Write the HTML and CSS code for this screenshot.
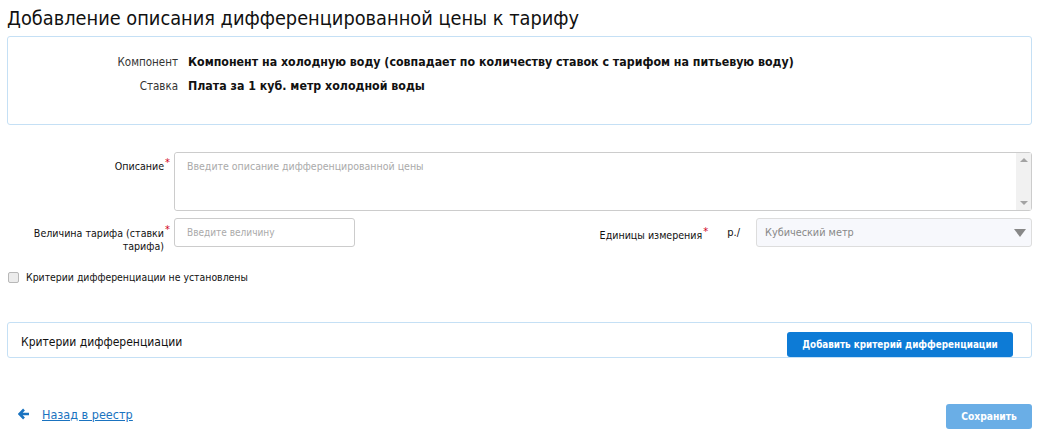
FILE: index.html
```html
<!DOCTYPE html>
<html>
<head lang="ru">
    <meta charset="UTF-8">
    <title>Добавление описания дифференцированной цены к тарифу</title>
    <link rel="stylesheet" href="styles.css">
</head>
<body>
    <div class="page">
        <h1 class="page-title">Добавление описания дифференцированной цены к тарифу</h1>

        <div class="info-box">
            <div class="info-row">
                <span class="info-label">Компонент</span>
                <span class="info-value">Компонент на холодную воду (совпадает по количеству ставок с тарифом на питьевую воду)</span>
            </div>
            <div class="info-row">
                <span class="info-label">Ставка</span>
                <span class="info-value">Плата за 1 куб. метр холодной воды</span>
            </div>
        </div>

        <div class="form-row">
            <label class="form-label">Описание<i class="req">*</i></label>
            <div class="area-wrap">
                <textarea class="area" placeholder="Введите описание дифференцированной цены"></textarea>
                <div class="fake-scroll">
                    <span class="arr-up"></span>
                    <span class="arr-down"></span>
                </div>
            </div>
        </div>

        <div class="form-row row-value">
            <label class="form-label">Величина тарифа (ставки<i class="req">*</i><br>тарифа)</label>
            <input class="field" type="text" placeholder="Введите величину">
            <div class="units">
                <label class="units-label">Единицы измерения<i class="req">*</i></label>
                <span class="units-prefix">р./</span>
                <div class="select-box">
                    <span>Кубический метр</span>
                    <span class="select-arrow"></span>
                </div>
            </div>
        </div>

        <label class="check-row">
            <input type="checkbox" class="check">
            <span>Критерии дифференциации не установлены</span>
        </label>

        <div class="criteria-box">
            <span class="criteria-title">Критерии дифференциации</span>
            <button class="btn btn-primary">Добавить критерий дифференциации</button>
        </div>

        <div class="footer">
            <a class="back-link" href="#">
                <svg class="back-icon" width="12" height="12" viewBox="0 0 12 12">
                    <path d="M6 1.5 L1.5 6 L6 10.5 M1.5 6 H11" stroke="#1a73c0" stroke-width="2.6" fill="none"/>
                </svg>
                <span>Назад в реестр</span>
            </a>
            <button class="btn btn-save">Сохранить</button>
        </div>
    </div>
</body>
</html>
```

FILE: styles.css
```css
body{
    margin: 0;
    padding: 0;
    background-color: #fff;
    font-family: "DejaVu Sans Condensed", "DejaVu Sans", sans-serif;
    color: #000;
}
.page{
    padding: 0 8px 0 7px;
}
.page-title{
    margin: 0;
    padding-top: 5px;
    height: 31px;
    line-height: 28px;
    font-size: 19.8px;
    font-weight: normal;
    color: #111;
}
.info-box{
    border: 1px solid #c5e0f5;
    border-radius: 3px;
    padding: 18px 0 19px 0;
    height: 50px;
}
.info-row{
    display: flex;
    align-items: baseline;
    height: 24px;
}
.info-label{
    width: 170px;
    text-align: right;
    font-size: 11.5px;
    color: #333;
    padding-right: 10px;
}
.info-value{
    font-size: 12.3px;
    font-weight: bold;
    color: #111;
}
.req{
    font-style: normal;
    color: #d0021b;
    font-size: 11px;
    vertical-align: 4px;
    margin-left: 1px;
    margin-right: -6px;
}
.form-row{
    display: flex;
    align-items: flex-start;
    margin-top: 27px;
}
.form-label{
    width: 157px;
    text-align: right;
    font-size: 10.6px;
    line-height: 13px;
    padding-top: 4px;
    margin-right: 10px;
    color: #111;
    flex: none;
}
.area-wrap{
    flex: 1;
    display: flex;
    height: 57px;
    border: 1px solid #ccc;
    border-radius: 3px;
}
.area{
    flex: 1;
    border: none;
    outline: none;
    resize: none;
    padding: 7px 12px;
    font-family: inherit;
    font-size: 10.5px;
    border-radius: 3px;
}
.area::placeholder,
.field::placeholder{
    color: #aaa;
}
.fake-scroll{
    width: 15px;
    background-color: #f1f1f1;
    position: relative;
}
.arr-up,
.arr-down{
    position: absolute;
    left: 4px;
    width: 0;
    height: 0;
    border-left: 4px solid transparent;
    border-right: 4px solid transparent;
}
.arr-up{
    top: 5px;
    border-bottom: 4px solid #a3a3a3;
}
.arr-down{
    bottom: 5px;
    border-top: 4px solid #a3a3a3;
}
.row-value{
    margin-top: 7px;
    height: 29px;
}
.row-value .form-label{
    padding-top: 5px;
}
.field{
    box-sizing: border-box;
    width: 181px;
    height: 29px;
    border: 1px solid #ccc;
    border-radius: 3px;
    padding: 0 12px;
    font-family: inherit;
    font-size: 10px;
    outline: none;
}
.units{
    flex: 1;
    display: flex;
    align-items: center;
    justify-content: flex-end;
    height: 29px;
}
.units-label{
    font-size: 10.6px;
    white-space: nowrap;
    color: #111;
}
.units-prefix{
    font-size: 11px;
    margin-left: 25px;
    margin-right: 16px;
    color: #111;
}
.select-box{
    box-sizing: border-box;
    width: 276px;
    height: 29px;
    border: 1px solid #ddd;
    border-radius: 3px;
    background-color: #f7f8fc;
    display: flex;
    align-items: center;
    justify-content: space-between;
    padding: 0 5px 0 8px;
    font-size: 10.8px;
    color: #888;
}
.select-arrow{
    width: 0;
    height: 0;
    border-left: 6px solid transparent;
    border-right: 6px solid transparent;
    border-top: 8px solid #888;
}
.check-row{
    display: flex;
    align-items: center;
    margin-top: 24px;
    font-size: 10.4px;
    color: #111;
}
.check{
    appearance: none;
    -webkit-appearance: none;
    box-sizing: border-box;
    margin: 0 7px 0 1px;
    width: 11px;
    height: 11px;
    border: 1px solid #b8b8b8;
    border-radius: 2px;
    background-color: #ececec;
}
.criteria-box{
    margin-top: 39px;
    height: 34px;
    border: 1px solid #c5e0f5;
    border-radius: 3px;
    display: flex;
    align-items: flex-end;
    justify-content: space-between;
    padding: 0 18px 0 13px;
}
.criteria-title{
    font-size: 12px;
    line-height: 14px;
    padding-bottom: 8px;
    color: #111;
}
.btn{
    border: none;
    border-radius: 3px;
    color: #fff;
    font-family: inherit;
    font-weight: bold;
    font-size: 10.2px;
    height: 25px;
    white-space: nowrap;
    cursor: pointer;
}
.btn-primary{
    background-color: #0d7bd6;
    width: 226px;
    font-size: 9.8px;
}
.footer{
    display: flex;
    justify-content: space-between;
    align-items: center;
    margin-top: 46px;
}
.back-link{
    display: flex;
    align-items: center;
    margin-left: 11px;
    margin-top: -5px;
    font-size: 12.5px;
    color: #1a73c0;
}
.back-icon{
    margin-right: 12px;
}
.back-link span{
    text-decoration: underline;
}
.btn-save{
    background-color: #6aaee6;
    width: 86px;
}
```
